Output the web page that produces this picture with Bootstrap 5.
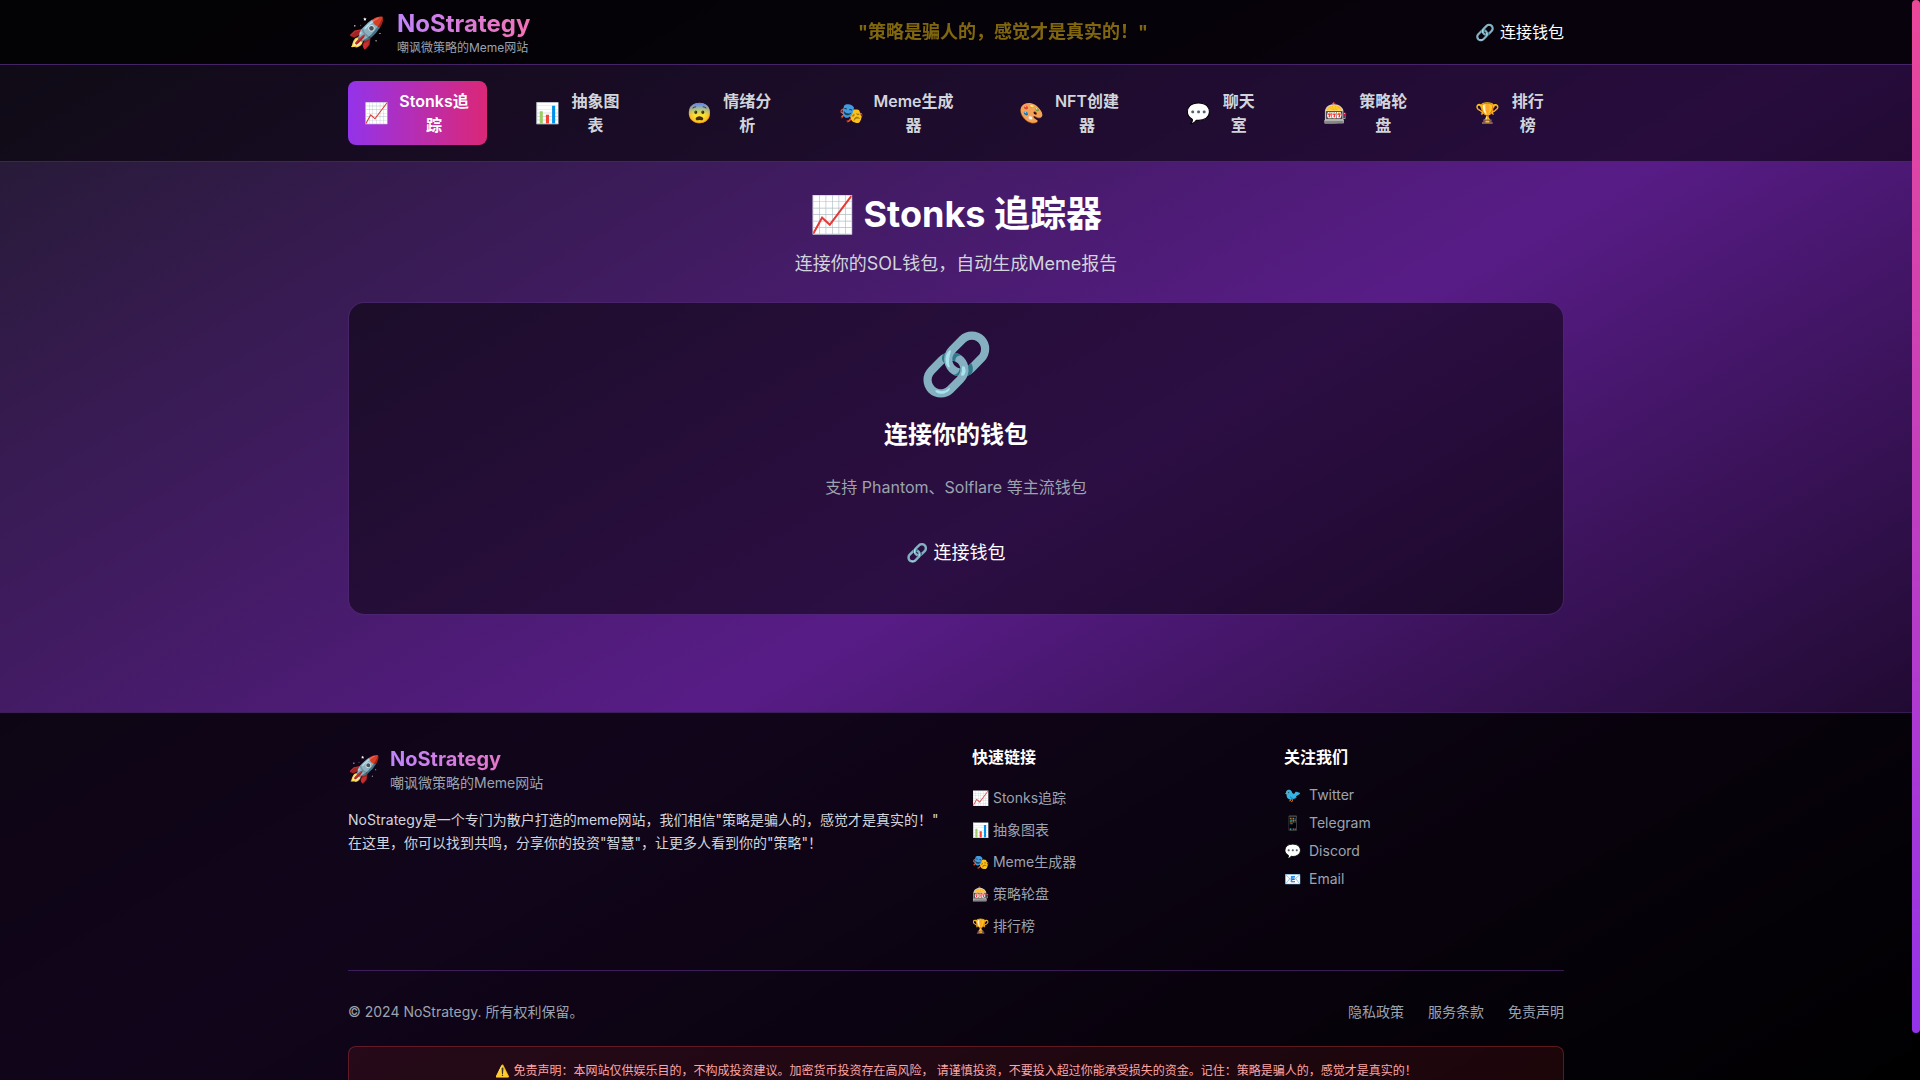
<!DOCTYPE html>
<html lang="zh-CN">
<head>
  <meta charset="UTF-8">
  <meta name="viewport" content="width=device-width, initial-scale=1">
  <title>NoStrategy</title>
  <link href="https://cdn.jsdelivr.net/npm/bootstrap@5.3.3/dist/css/bootstrap.min.css" rel="stylesheet">
  <style>
    html, body { height: 100%; overflow: hidden; background: #000; }
    body { font-family: Inter, "Noto Sans CJK SC", sans-serif; color: #fff; }
    .page-bg { flex: 1 1 0; min-width: 0; background: linear-gradient(to bottom right, #201a2c 0%, #581c87 50%, #000 100%); }
    .bar-track { flex: 0 0 8px; height: 100vh; background: #000; }
    .bar-thumb { height: 1033px; border-radius: 4px; background: linear-gradient(180deg, #ec4899, #9333ea); }

    .page-wrap { max-width: 1280px; margin: 0 auto; padding: 0 32px; }
    .top-bar { height: 65px; background: rgba(0,0,0,.9); border-bottom: 1px solid rgba(168,85,247,.4); }
    .tab-bar { height: 97px; background: rgba(0,0,0,.55); border-bottom: 1px solid rgba(168,85,247,.3); }
    .tab-bar .page-wrap { padding-top: 16px; }

    .grad-text {
      background: linear-gradient(90deg, #c084fc, #f472b6);
      -webkit-background-clip: text;
      background-clip: text;
      color: transparent;
    }
    .brand-rocket { font-size: 30px; line-height: 36px; }
    .brand-name { font-size: 24px; line-height: 32px; font-weight: 700; }
    .brand-sub { font-size: 12px; line-height: 16px; color: #9ca3af; }
    .slogan { font-size: 18px; line-height: 28px; font-weight: 700; color: #facc15; opacity: .5; }
    .plain-btn { background: none; border: 0; padding: 0; color: #fff; font-size: 16px; line-height: 24px; }

    .tab-list { gap: 32px; flex-wrap: nowrap; }
    .tab-item {
      display: flex; align-items: center; gap: 8px;
      padding: 8px 16px; border: 0; border-radius: 8px; background: none;
      color: #d1d5db; font-size: 16px; line-height: 24px; font-weight: 600;
    }
    .tab-item.on { background: linear-gradient(90deg, #9333ea, #db2777); color: #fff; }
    .tab-emoji { font-size: 20px; line-height: 28px; }

    .stonks-main { height: 550px; padding-top: 32px; }
    .stonks-title { font-size: 36px; line-height: 40px; font-weight: 700; margin-bottom: 16px; }
    .stonks-lead { font-size: 18px; line-height: 28px; color: #d1d5db; margin-bottom: 24px; }
    .wallet-card {
      height: 313px; padding-top: 30px;
      background: rgba(0,0,0,.5); border: 1px solid rgba(168,85,247,.3); border-radius: 16px;
    }
    .wallet-icon { font-size: 60px; line-height: 60px; margin-bottom: 26px; }
    .wallet-head { font-size: 24px; line-height: 32px; font-weight: 700; margin-bottom: 24px; }
    .wallet-note { font-size: 16px; line-height: 24px; color: #9ca3af; margin-bottom: 40px; }
    .wallet-btn { font-size: 18px; line-height: 28px; }

    .foot-area { background: rgba(0,0,0,.8); border-top: 1px solid rgba(168,85,247,.3); padding: 32px 0; }
    .foot-row { --bs-gutter-x: 32px; }
    .foot-rocket { font-size: 26px; line-height: 36px; }
    .foot-name { font-size: 20px; line-height: 28px; font-weight: 700; }
    .foot-sub { font-size: 14px; line-height: 20px; color: #9ca3af; }
    .foot-brand { margin-left: 2px; }
    .foot-text { font-size: 14px; line-height: 23px; color: #d1d5db; margin: 15px 0 0; }
    .foot-head { font-size: 16px; line-height: 24px; font-weight: 700; margin-bottom: 19px; }
    .foot-links { list-style: none; padding: 0; margin: 0; }
    .foot-links li { font-size: 14px; line-height: 20px; color: #9ca3af; margin-bottom: 12px; }
    .foot-social li { margin-bottom: 8px; display: flex; gap: 8px; }
    .foot-social { margin-top: -3px; }
    .foot-line { border-top: 1px solid rgba(168,85,247,.3); margin-top: 22px; padding-top: 31px; }
    .foot-copy { font-size: 14px; line-height: 20px; color: #9ca3af; }
    .warn-box {
      margin-top: 24px; padding: 14px 16px; text-align: center;
      font-size: 12px; line-height: 20px; color: #fca5a5;
      background: rgba(127,29,29,.2); border: 1px solid rgba(239,68,68,.3); border-radius: 8px;
    }
  </style>
</head>
<body class="d-flex align-items-start">

<div class="page-bg">

<header class="top-bar">
  <div class="page-wrap d-flex align-items-center justify-content-between h-100">
    <div class="d-flex align-items-center gap-2">
      <span class="brand-rocket">🚀</span>
      <div class="ms-1">
        <div class="brand-name grad-text">NoStrategy</div>
        <div class="brand-sub">嘲讽微策略的Meme网站</div>
      </div>
    </div>
    <div class="slogan">"策略是骗人的，感觉才是真实的！"</div>
    <button class="plain-btn" type="button">🔗 连接钱包</button>
  </div>
</header>

<nav class="tab-bar">
  <div class="page-wrap">
    <div class="d-flex tab-list" id="tabs"></div>
  </div>
</nav>

<main class="stonks-main">
  <div class="page-wrap">
    <div class="text-center">
      <h1 class="stonks-title">📈 Stonks 追踪器</h1>
      <p class="stonks-lead">连接你的SOL钱包，自动生成Meme报告</p>
    </div>
    <div class="wallet-card text-center">
      <div class="wallet-icon">🔗</div>
      <h3 class="wallet-head">连接你的钱包</h3>
      <p class="wallet-note">支持 Phantom、Solflare 等主流钱包</p>
      <button class="plain-btn wallet-btn" type="button">🔗 连接钱包</button>
    </div>
  </div>
</main>

<footer class="foot-area">
  <div class="page-wrap">
    <div class="row foot-row">
      <div class="col-6">
        <div class="d-flex align-items-center gap-2">
          <span class="foot-rocket">🚀</span>
          <div class="foot-brand">
            <div class="foot-name grad-text">NoStrategy</div>
            <div class="foot-sub">嘲讽微策略的Meme网站</div>
          </div>
        </div>
        <p class="foot-text">NoStrategy是一个专门为散户打造的meme网站，我们相信"策略是骗人的，感觉才是真实的！"<br>在这里，你可以找到共鸣，分享你的投资"智慧"，让更多人看到你的"策略"！</p>
      </div>
      <div class="col-3">
        <div class="foot-head">快速链接</div>
        <ul class="foot-links">
          <li>📈 Stonks追踪</li>
          <li>📊 抽象图表</li>
          <li>🎭 Meme生成器</li>
          <li>🎰 策略轮盘</li>
          <li>🏆 排行榜</li>
        </ul>
      </div>
      <div class="col-3">
        <div class="foot-head">关注我们</div>
        <ul class="foot-links foot-social">
          <li><span>🐦</span><span>Twitter</span></li>
          <li><span>📱</span><span>Telegram</span></li>
          <li><span>💬</span><span>Discord</span></li>
          <li><span>📧</span><span>Email</span></li>
        </ul>
      </div>
    </div>
    <div class="foot-line d-flex justify-content-between foot-copy">
      <div>© 2024 NoStrategy. 所有权利保留。</div>
      <div class="d-flex gap-4">
        <span>隐私政策</span>
        <span>服务条款</span>
        <span>免责声明</span>
      </div>
    </div>
    <div class="warn-box">⚠️ 免责声明：本网站仅供娱乐目的，不构成投资建议。加密货币投资存在高风险， 请谨慎投资，不要投入超过你能承受损失的资金。记住：策略是骗人的，感觉才是真实的！</div>
  </div>
</footer>

</div>

<div class="bar-track"><div class="bar-thumb"></div></div>

<script src="https://cdn.jsdelivr.net/npm/bootstrap@5.3.3/dist/js/bootstrap.bundle.min.js"></script>
<script>
const tabs = [
  ['📈', 'Stonks追踪'], ['📊', '抽象图表'], ['😨', '情绪分析'], ['🎭', 'Meme生成器'],
  ['🎨', 'NFT创建器'], ['💬', '聊天室'], ['🎰', '策略轮盘'], ['🏆', '排行榜']
];
document.getElementById('tabs').innerHTML = tabs.map((t, i) =>
  `<button type="button" class="tab-item${i === 0 ? ' on' : ''}"><span class="tab-emoji">${t[0]}</span><span>${t[1]}</span></button>`
).join('');
</script>
</body>
</html>
